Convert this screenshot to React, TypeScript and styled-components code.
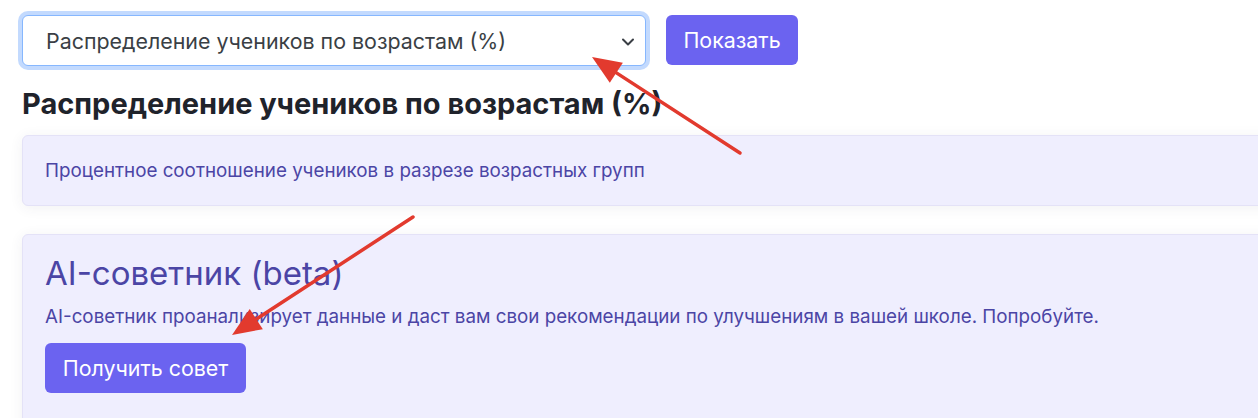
import React from "react";
import styled, { createGlobalStyle } from "styled-components";

const Global = createGlobalStyle`
  html, body { margin: 0; padding: 0; background: #fff; }
  body { font-family: Inter, "Noto Sans", "Liberation Sans", sans-serif; overflow: hidden; }
  * { box-sizing: border-box; }
`;

const Page = styled.div`
  position: relative;
  width: 1258px;
  height: 418px;
  padding: 15px 0 0 22px;
  overflow: hidden;
`;

const Toolbar = styled.div`
  display: flex;
  gap: 20px;
  align-items: flex-start;
`;

const SelectBox = styled.div`
  width: 624px;
  height: 51px;
  border: 1px solid #86b7fe;
  border-radius: 6px;
  box-shadow: 0 0 0 4px #c3dafe;
  display: flex;
  align-items: center;
  justify-content: space-between;
  padding: 0 10px 0 23px;
  font-size: 21.4px;
  color: #3a3f45;
  background: #fff;
`;

const Chevron = styled.svg`
  width: 14px;
  height: 14px;
  margin-top: 2px;
`;

const Button = styled.button<{ $w: number }>`
  width: ${(p) => p.$w}px;
  height: 50px;
  border: none;
  border-radius: 6px;
  background: #6b63f0;
  color: #fff;
  font-family: inherit;
  font-size: 21.4px;
  padding: 0;
  cursor: pointer;
`;

const Heading = styled.h2`
  margin: 21px 0 13px;
  font-size: 29px;
  line-height: 1.2;
  font-weight: 700;
  color: #1f232b;
`;

const Panel = styled.div<{ $h: number }>`
  height: ${(p) => p.$h}px;
  margin-right: -20px;
  background: #efeefe;
  border: 1px solid #e4e2f7;
  border-radius: 6px;
  box-shadow: 0 2px 14px rgba(60, 60, 90, 0.07);
  color: #4b45a5;
`;

const InfoPanel = styled(Panel)`
  display: flex;
  align-items: center;
  padding: 0 22px;
  font-size: 18.8px;
  margin-bottom: 28px;
`;

const AdvisorPanel = styled(Panel)`
  padding: 19px 22px;
`;

const AdvisorTitle = styled.div`
  font-size: 33px;
  line-height: 1.2;
  color: #4b45a5;
  margin-bottom: 12px;
`;

const AdvisorText = styled.p`
  margin: 0 0 13px;
  font-size: 18.8px;
  line-height: 1.3;
`;

const Overlay = styled.svg`
  position: absolute;
  left: 0;
  top: 0;
  pointer-events: none;
`;

function Arrow({ x1, y1, x2, y2 }: { x1: number; y1: number; x2: number; y2: number }) {
  const dx = x2 - x1;
  const dy = y2 - y1;
  const len = Math.hypot(dx, dy);
  const ux = dx / len;
  const uy = dy / len;
  const headL = 29;
  const headW = 12;
  const bx = x2 - ux * headL;
  const by = y2 - uy * headL;
  const px = -uy;
  const py = ux;
  const pts = `${x2},${y2} ${bx + px * headW},${by + py * headW} ${bx - px * headW},${by - py * headW}`;
  return (
    <g>
      <line x1={x1} y1={y1} x2={bx + ux * 4} y2={by + uy * 4} stroke="#e23a2e" strokeWidth={3.5} strokeLinecap="round" />
      <polygon points={pts} fill="#e23a2e" />
    </g>
  );
}

export default function App() {
  return (
    <>
      <Global />
      <Page>
        <Toolbar>
          <SelectBox>
            <span>Распределение учеников по возрастам (%)</span>
            <Chevron viewBox="0 0 14 14">
              <path d="M2 4.5 L7 9.5 L12 4.5" fill="none" stroke="#3a3f45" strokeWidth="2" strokeLinecap="round" strokeLinejoin="round" />
            </Chevron>
          </SelectBox>
          <Button $w={132}>Показать</Button>
        </Toolbar>
        <Heading>Распределение учеников по возрастам (%)</Heading>
        <InfoPanel $h={71}>Процентное соотношение учеников в разрезе возрастных групп</InfoPanel>
        <AdvisorPanel $h={220}>
          <AdvisorTitle>AI-советник (beta)</AdvisorTitle>
          <AdvisorText>
            AI-советник проанализирует данные и даст вам свои рекомендации по улучшениям в вашей школе. Попробуйте.
          </AdvisorText>
          <Button $w={201}>Получить совет</Button>
        </AdvisorPanel>
        <Overlay width="1258" height="418" viewBox="0 0 1258 418">
          <Arrow x1={740} y1={153} x2={592} y2={57} />
          <Arrow x1={413} y1={217} x2={232} y2={335} />
        </Overlay>
      </Page>
    </>
  );
}
